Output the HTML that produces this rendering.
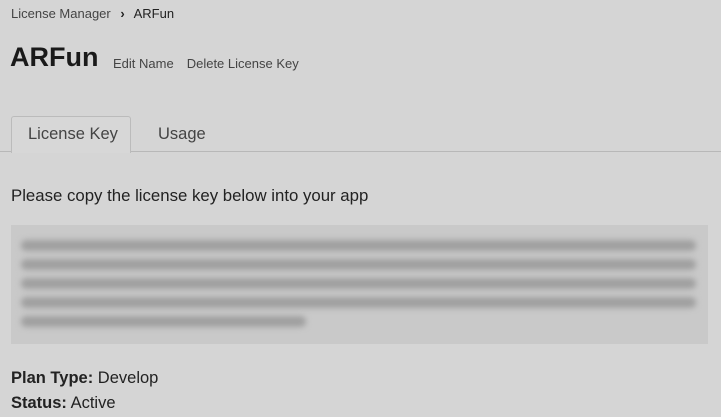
<!DOCTYPE html>
<html><head><style>
body{margin:0;width:721px;height:417px;background:#d5d5d5;font-family:"Liberation Sans",sans-serif;color:#1a1a1a;position:relative;overflow:hidden}
.a{position:absolute;white-space:nowrap}
.bar{position:absolute;height:11px;background:#a0a0a0;border-radius:5px;filter:blur(3px)}
</style></head><body>
<div class="a" style="left:11px;top:6px;font-size:13px;color:#444">License Manager <b style="margin:0 6px;color:#222">›</b> <span style="color:#222">ARFun</span></div>
<div class="a" style="left:10px;top:42px;font-size:27px;font-weight:bold;color:#1a1a1a">ARFun</div>
<div class="a" style="left:113px;top:56px;font-size:13px;color:#444">Edit Name<span style="margin-left:13px">Delete License Key</span></div>
<div style="position:absolute;left:0;top:151px;width:721px;height:1px;background:#b8b8b8"></div>
<div style="position:absolute;left:11px;top:116px;width:118px;height:36px;border:1px solid #bbb;border-bottom:none;background:#d7d7d7;border-radius:3px 3px 0 0"></div>
<div class="a" style="left:28px;top:125px;font-size:16.5px;color:#444">License Key</div>
<div class="a" style="left:158px;top:125px;font-size:16.5px;color:#444">Usage</div>
<div class="a" style="left:11px;top:186px;font-size:16.8px;color:#222">Please copy the license key below into your app</div>
<div style="position:absolute;left:11px;top:225px;width:697px;height:119px;background:#c9c9c9">
<div class="bar" style="left:10px;top:15px;width:675px"></div>
<div class="bar" style="left:10px;top:34px;width:675px"></div>
<div class="bar" style="left:10px;top:53px;width:675px"></div>
<div class="bar" style="left:10px;top:72px;width:675px"></div>
<div class="bar" style="left:10px;top:91px;width:285px"></div>
</div>
<div class="a" style="left:11px;top:369px;font-size:16.5px;color:#222"><b>Plan Type:</b> Develop</div>
<div class="a" style="left:11px;top:394px;font-size:16.5px;color:#222"><b>Status:</b> Active</div>
</body></html>
